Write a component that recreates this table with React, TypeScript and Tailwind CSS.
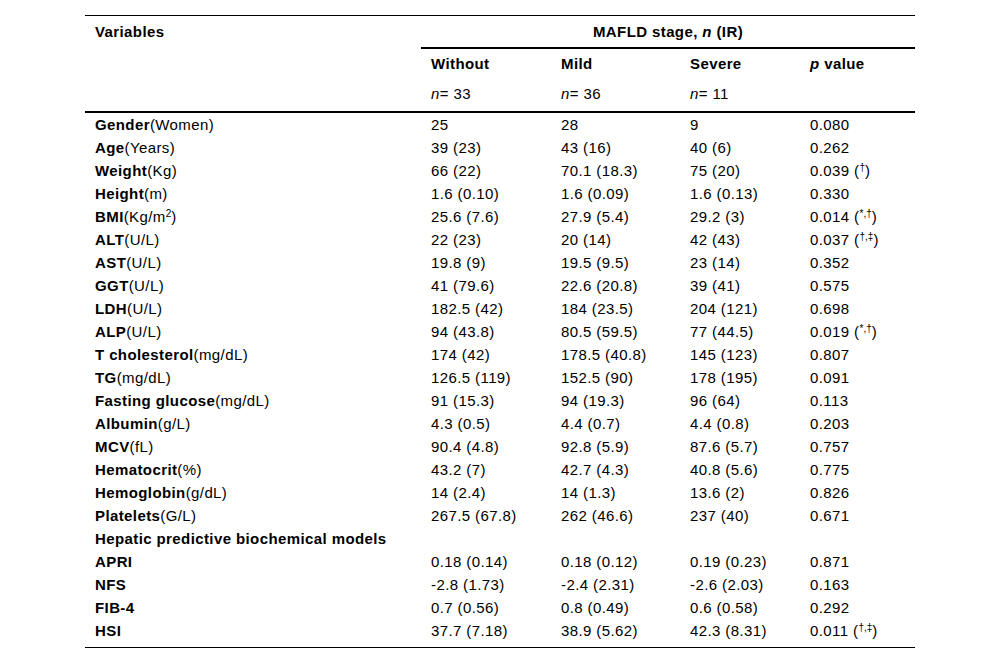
import type { ReactNode } from "react";

type Row = {
    label: string;
    unit?: ReactNode;
    vals?: string[];
    p?: string;
    mark?: string;
};

const rows: Row[] = [
    { label: "Gender", unit: "(Women)", vals: ["25", "28", "9"], p: "0.080" },
    { label: "Age", unit: "(Years)", vals: ["39 (23)", "43 (16)", "40 (6)"], p: "0.262" },
    { label: "Weight", unit: "(Kg)", vals: ["66 (22)", "70.1 (18.3)", "75 (20)"], p: "0.039", mark: "†" },
    { label: "Height", unit: "(m)", vals: ["1.6 (0.10)", "1.6 (0.09)", "1.6 (0.13)"], p: "0.330" },
    { label: "BMI", unit: <>(Kg/m<sup className="text-[10px] tracking-normal">2</sup>)</>, vals: ["25.6 (7.6)", "27.9 (5.4)", "29.2 (3)"], p: "0.014", mark: "*,†" },
    { label: "ALT", unit: "(U/L)", vals: ["22 (23)", "20 (14)", "42 (43)"], p: "0.037", mark: "†,‡" },
    { label: "AST", unit: "(U/L)", vals: ["19.8 (9)", "19.5 (9.5)", "23 (14)"], p: "0.352" },
    { label: "GGT", unit: "(U/L)", vals: ["41 (79.6)", "22.6 (20.8)", "39 (41)"], p: "0.575" },
    { label: "LDH", unit: "(U/L)", vals: ["182.5 (42)", "184 (23.5)", "204 (121)"], p: "0.698" },
    { label: "ALP", unit: "(U/L)", vals: ["94 (43.8)", "80.5 (59.5)", "77 (44.5)"], p: "0.019", mark: "*,†" },
    { label: "T cholesterol", unit: "(mg/dL)", vals: ["174 (42)", "178.5 (40.8)", "145 (123)"], p: "0.807" },
    { label: "TG", unit: "(mg/dL)", vals: ["126.5 (119)", "152.5 (90)", "178 (195)"], p: "0.091" },
    { label: "Fasting glucose", unit: "(mg/dL)", vals: ["91 (15.3)", "94 (19.3)", "96 (64)"], p: "0.113" },
    { label: "Albumin", unit: "(g/L)", vals: ["4.3 (0.5)", "4.4 (0.7)", "4.4 (0.8)"], p: "0.203" },
    { label: "MCV", unit: "(fL)", vals: ["90.4 (4.8)", "92.8 (5.9)", "87.6 (5.7)"], p: "0.757" },
    { label: "Hematocrit", unit: "(%)", vals: ["43.2 (7)", "42.7 (4.3)", "40.8 (5.6)"], p: "0.775" },
    { label: "Hemoglobin", unit: "(g/dL)", vals: ["14 (2.4)", "14 (1.3)", "13.6 (2)"], p: "0.826" },
    { label: "Platelets", unit: "(G/L)", vals: ["267.5 (67.8)", "262 (46.6)", "237 (40)"], p: "0.671" },
    { label: "Hepatic predictive biochemical models" },
    { label: "APRI", vals: ["0.18 (0.14)", "0.18 (0.12)", "0.19 (0.23)"], p: "0.871" },
    { label: "NFS", vals: ["-2.8 (1.73)", "-2.4 (2.31)", "-2.6 (2.03)"], p: "0.163" },
    { label: "FIB-4", vals: ["0.7 (0.56)", "0.8 (0.49)", "0.6 (0.58)"], p: "0.292" },
    { label: "HSI", vals: ["37.7 (7.18)", "38.9 (5.62)", "42.3 (8.31)"], p: "0.011", mark: "†,‡" },
];

const cols = "grid grid-cols-[336px_130px_129px_120px_115px]";

const App = () => {
    return (
        <div className="min-h-[663px] w-[1000px] bg-white pt-[15px] text-black" style={{ fontFamily: '"Liberation Sans", Arial, sans-serif' }}>
            <div className="mx-[85px] w-[830px] border-t border-b border-black text-[15px] tracking-[0.4px]">
                {/* header */}
                <div className={`${cols} grid-rows-[33px_30px_32px]`}>
                    <div className="row-span-3 pl-[10px] leading-[31px] font-bold">Variables</div>
                    <div className="col-span-4 border-b-2 border-black text-center leading-[31px] font-bold">
                        MAFLD stage, <i>n</i> (IR)
                    </div>
                    <div className="pl-[10px] leading-[30px] font-bold">Without</div>
                    <div className="pl-[10px] leading-[30px] font-bold">Mild</div>
                    <div className="pl-[10px] leading-[30px] font-bold">Severe</div>
                    <div className="pl-[10px] leading-[30px] font-bold"><i>p</i> value</div>
                    <div className="pl-[10px] leading-[30px]"><i>n</i>= 33</div>
                    <div className="pl-[10px] leading-[30px]"><i>n</i>= 36</div>
                    <div className="pl-[10px] leading-[30px]"><i>n</i>= 11</div>
                    <div />
                </div>

                {/* body */}
                <div className="border-t-2 border-black pb-[5px]">
                    {rows.map((r) => (
                        <div key={r.label} className={`${cols} h-[23px] leading-[23px]`}>
                            <div className="pl-[10px] whitespace-nowrap">
                                <b>{r.label}</b>{r.unit}
                            </div>
                            {r.vals ? (
                                <>
                                    {r.vals.map((v, i) => (
                                        <div key={i} className="pl-[10px] whitespace-nowrap">{v}</div>
                                    ))}
                                    <div className="pl-[10px] whitespace-nowrap">
                                        {r.p}
                                        {r.mark && (
                                            <> (<sup className="text-[10px] tracking-normal">{r.mark}</sup>)</>
                                        )}
                                    </div>
                                </>
                            ) : null}
                        </div>
                    ))}
                </div>
            </div>
        </div>
    );
};

export default App;
